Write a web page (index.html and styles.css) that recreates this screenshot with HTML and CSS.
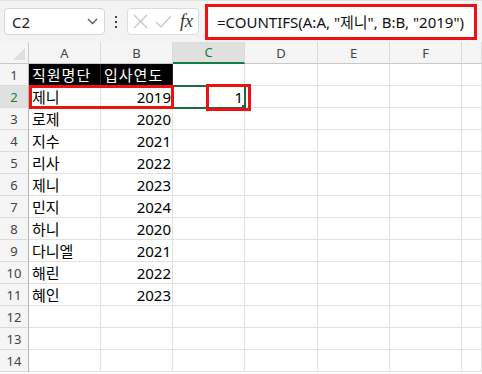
FILE: index.html
```html
<!DOCTYPE html>
<html lang="ko">
<head>
    <meta charset="UTF-8">
    <title>COUNTIFS</title>
    <link rel="stylesheet" href="styles.css">
</head>
<body>
    <div class="app">
        <div class="formula-bar">
            <div class="name-box">
                <span>C2</span>
                <svg class="chevron" width="11" height="7" viewBox="0 0 11 7"><path d="M1 1l4.5 4.5L10 1" fill="none" stroke="#555" stroke-width="1.3"/></svg>
            </div>
            <div class="dots"><i></i><i></i><i></i></div>
            <div class="fx-box">
                <svg width="15" height="15" viewBox="0 0 15 15"><path d="M1 1l13 13M14 1L1 14" stroke="#c4c4c4" stroke-width="1.2"/></svg>
                <svg width="17" height="13" viewBox="0 0 17 13"><path d="M1 7l5 5L16 1" fill="none" stroke="#c4c4c4" stroke-width="1.2"/></svg>
                <span class="fx">fx</span>
            </div>
            <div class="formula">=COUNTIFS(A:A, "제니", B:B, "2019")</div>
        </div>

        <div class="sheet">
            <div class="corner"></div>
            <div class="col-head">A</div>
            <div class="col-head">B</div>
            <div class="col-head selected">C</div>
            <div class="col-head">D</div>
            <div class="col-head">E</div>
            <div class="col-head">F</div>
            <div class="col-head last"></div>

            <div class="row-head">1</div><div class="cell title">직원명단</div><div class="cell title">입사연도</div><div class="cell"></div><div class="cell"></div><div class="cell"></div><div class="cell"></div><div class="cell"></div>
            <div class="row-head selected">2</div><div class="cell">제니</div><div class="cell num">2019</div><div class="cell num active">1</div><div class="cell"></div><div class="cell"></div><div class="cell"></div><div class="cell"></div>
            <div class="row-head">3</div><div class="cell">로제</div><div class="cell num">2020</div><div class="cell"></div><div class="cell"></div><div class="cell"></div><div class="cell"></div><div class="cell"></div>
            <div class="row-head">4</div><div class="cell">지수</div><div class="cell num">2021</div><div class="cell"></div><div class="cell"></div><div class="cell"></div><div class="cell"></div><div class="cell"></div>
            <div class="row-head">5</div><div class="cell">리사</div><div class="cell num">2022</div><div class="cell"></div><div class="cell"></div><div class="cell"></div><div class="cell"></div><div class="cell"></div>
            <div class="row-head">6</div><div class="cell">제니</div><div class="cell num">2023</div><div class="cell"></div><div class="cell"></div><div class="cell"></div><div class="cell"></div><div class="cell"></div>
            <div class="row-head">7</div><div class="cell">민지</div><div class="cell num">2024</div><div class="cell"></div><div class="cell"></div><div class="cell"></div><div class="cell"></div><div class="cell"></div>
            <div class="row-head">8</div><div class="cell">하니</div><div class="cell num">2020</div><div class="cell"></div><div class="cell"></div><div class="cell"></div><div class="cell"></div><div class="cell"></div>
            <div class="row-head">9</div><div class="cell">다니엘</div><div class="cell num">2021</div><div class="cell"></div><div class="cell"></div><div class="cell"></div><div class="cell"></div><div class="cell"></div>
            <div class="row-head">10</div><div class="cell">해린</div><div class="cell num">2022</div><div class="cell"></div><div class="cell"></div><div class="cell"></div><div class="cell"></div><div class="cell"></div>
            <div class="row-head">11</div><div class="cell">혜인</div><div class="cell num">2023</div><div class="cell"></div><div class="cell"></div><div class="cell"></div><div class="cell"></div><div class="cell"></div>
            <div class="row-head">12</div><div class="cell"></div><div class="cell"></div><div class="cell"></div><div class="cell"></div><div class="cell"></div><div class="cell"></div><div class="cell"></div>
            <div class="row-head">13</div><div class="cell"></div><div class="cell"></div><div class="cell"></div><div class="cell"></div><div class="cell"></div><div class="cell"></div><div class="cell"></div>
            <div class="row-head">14</div><div class="cell"></div><div class="cell"></div><div class="cell"></div><div class="cell"></div><div class="cell"></div><div class="cell"></div><div class="cell"></div>

            <!-- annotation boxes -->
            <div class="mark mark-row"></div>
            <div class="mark mark-result"></div>
        </div>
    </div>
</body>
</html>
```

FILE: styles.css
```css
body {
    margin: 0;
    font-family: "Noto Sans", "Noto Sans CJK KR", sans-serif;
    background: #fff;
    color: #000;
}

.app {
    width: 482px;
    height: 374px;
    overflow: hidden;
}

/* ===== formula bar ===== */
.formula-bar {
    height: 42px;
    display: flex;
    align-items: center;
    background: #f3f3f3;
    border-top: 1px solid #e3e3e3;
    box-sizing: border-box;
}

.name-box {
    margin-left: 4px;
    width: 101px;
    height: 27px;
    box-sizing: border-box;
    background: #fff;
    border: 1px solid #d6d6d6;
    border-radius: 4px;
    display: flex;
    align-items: center;
    justify-content: space-between;
    padding: 0 6px 0 7px;
    font-size: 15px;
    color: #222;
}

.dots {
    width: 22px;
    display: flex;
    flex-direction: column;
    align-items: center;
    gap: 3px;
}

.dots i {
    width: 2px;
    height: 2px;
    background: #444;
}

.fx-box {
    width: 72px;
    height: 27px;
    box-sizing: border-box;
    background: #fff;
    border: 1px solid #dcdcdc;
    border-radius: 4px;
    display: flex;
    align-items: center;
    gap: 7px;
    padding-left: 5px;
}

.fx {
    font-family: "Liberation Serif", serif;
    font-style: italic;
    font-size: 18px;
    color: #333;
    margin-left: 1px;
}

.formula {
    margin-left: 6px;
    width: 272px;
    height: 36px;
    box-sizing: border-box;
    background: #fff;
    border: 3px solid #ee1111;
    padding-left: 9px;
    font-size: 15px;
    line-height: 30px;
    white-space: nowrap;
    color: #111;
}

/* ===== sheet ===== */
.sheet {
    position: relative;
    display: grid;
    grid-template-columns: 29px 72px 72px 72px 73px 72px 72px 20px;
    grid-template-rows: 22px;
    grid-auto-rows: 22px;
}

.corner,
.col-head,
.row-head {
    background: #f5f5f5;
    color: #444;
    font-size: 13px;
    box-sizing: border-box;
}

.corner {
    border-right: 1px solid #c8c8c8;
    border-bottom: 1px solid #c8c8c8;
    position: relative;
}

.corner::after {
    content: "";
    position: absolute;
    right: 3px;
    bottom: 3px;
    border-style: solid;
    border-width: 0 0 12px 12px;
    border-color: transparent transparent #dedede transparent;
}

.col-head {
    display: flex;
    align-items: center;
    justify-content: center;
    border-right: 1px solid #dadada;
    border-bottom: 1px solid #c8c8c8;
}

.row-head {
    display: flex;
    align-items: center;
    justify-content: center;
    border-right: 1px solid #b4b4b4;
    border-bottom: 1px solid #dadada;
    padding-top: 1px;
}

.col-head.selected {
    background: #e0e0e0;
    color: #137e43;
    border-bottom: 2px solid #137e43;
}

.row-head.selected {
    background: #e0e0e0;
    color: #137e43;
}

.cell {
    box-sizing: border-box;
    border-right: 1px solid #e1e1e1;
    border-bottom: 1px solid #e1e1e1;
    font-size: 15px;
    line-height: 22px;
    padding: 0 3px;
    white-space: nowrap;
    overflow: hidden;
}

.cell.num {
    text-align: right;
    padding-right: 1px;
}

.cell.title {
    background: #000;
    color: #fff;
    letter-spacing: 1px;
    border-color: #2a2a2a;
}

.cell.active {
    outline: 2px solid #1d6b3e;
    outline-offset: -1px;
    position: relative;
}

.cell.active::after {
    content: "";
    position: absolute;
    right: -4px;
    bottom: -4px;
    width: 5px;
    height: 5px;
    background: #1d6b3e;
    border: 1px solid #fff;
}

/* red annotation boxes */
.mark {
    position: absolute;
    border: 3px solid #ee1111;
    box-sizing: border-box;
    pointer-events: none;
}

.mark-row {
    left: 29px;
    top: 43px;
    width: 145px;
    height: 24px;
}

.mark-result {
    left: 206px;
    top: 42px;
    width: 45px;
    height: 27px;
}
```
